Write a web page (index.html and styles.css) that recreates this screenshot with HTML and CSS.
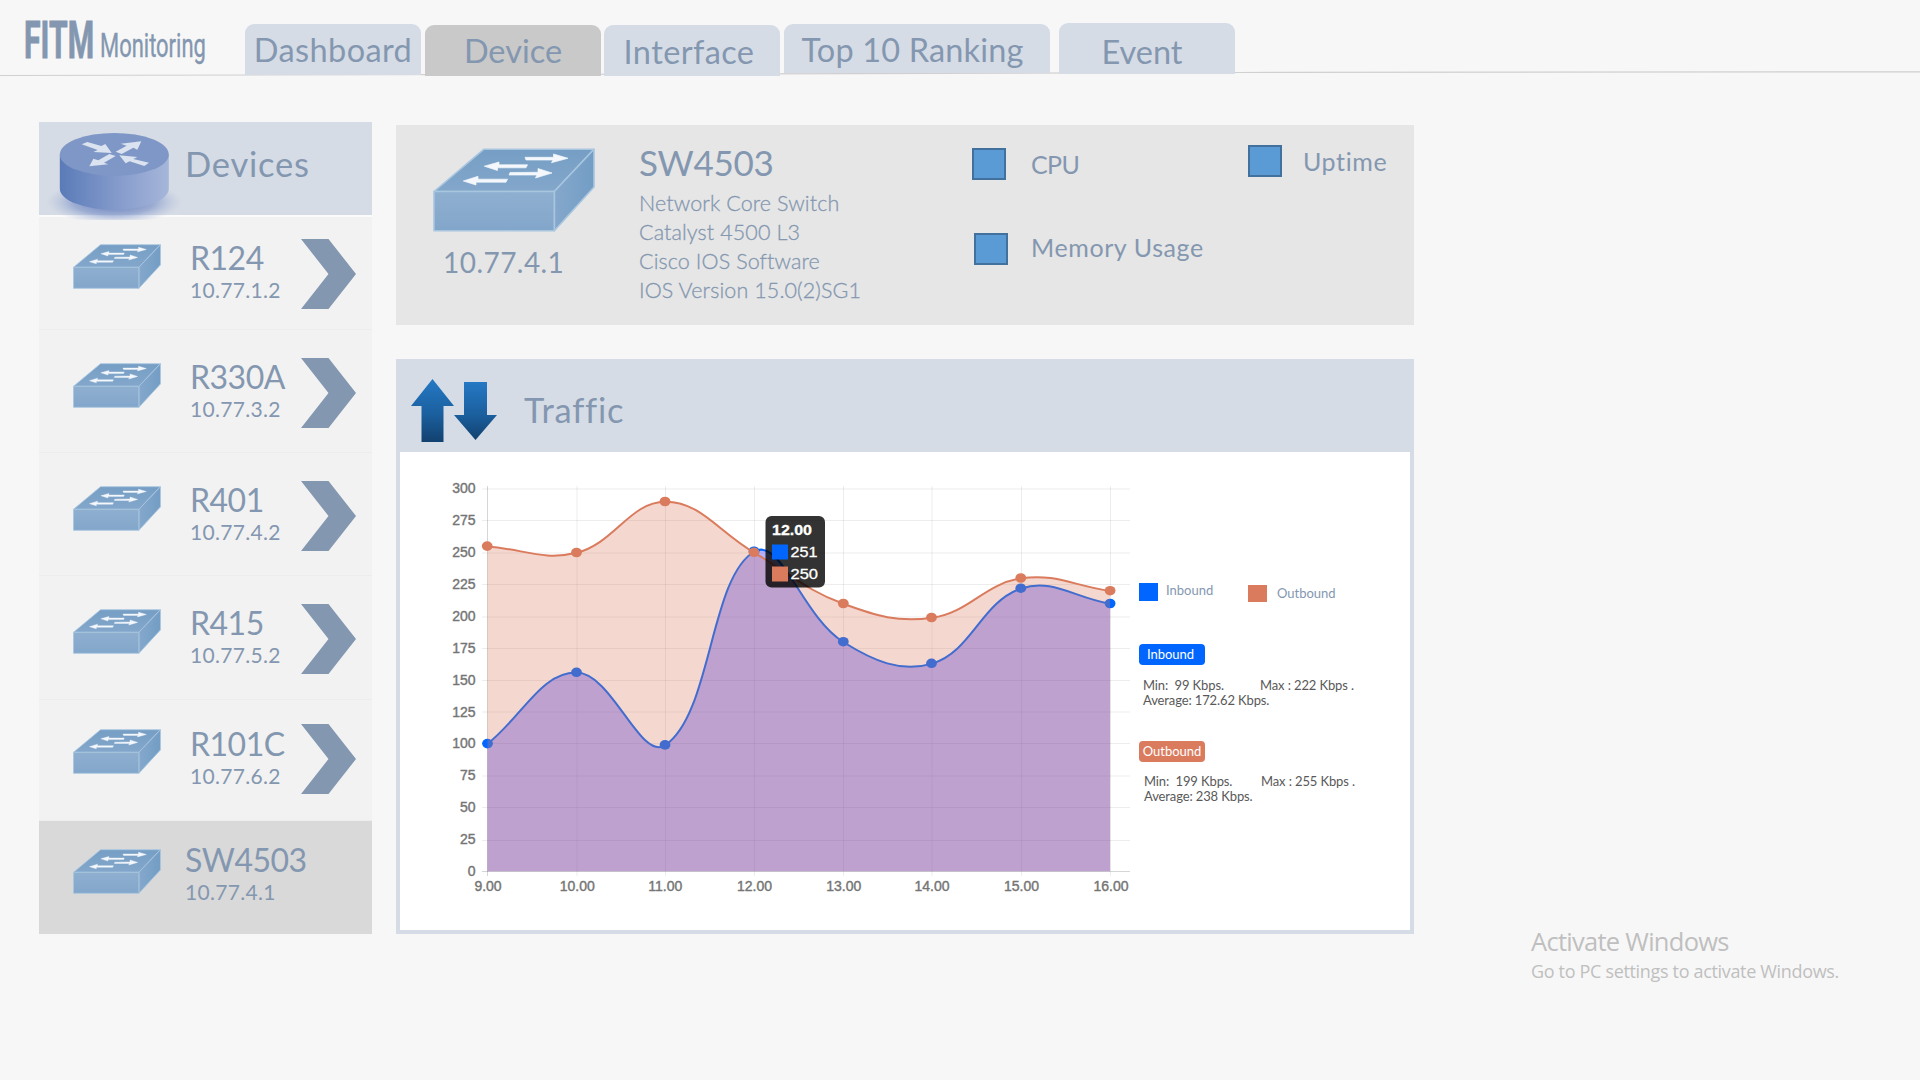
FILE: index.html
```html
<!DOCTYPE html>
<html lang="en">
<head>
<meta charset="utf-8">
<title>FITM Monitoring</title>
<link rel="stylesheet" href="styles.css">
</head>
<body>
<svg class="defs" aria-hidden="true">
  <defs>
    <linearGradient id="swTop" x1="0" y1="0" x2="0" y2="1"><stop offset="0" stop-color="#769ec4"/><stop offset="1" stop-color="#83a7cb"/></linearGradient>
    <linearGradient id="swFront" x1="0" y1="0" x2="0" y2="1"><stop offset="0" stop-color="#8fafd0"/><stop offset="1" stop-color="#82a6ca"/></linearGradient>
    <linearGradient id="swSide" x1="0" y1="0" x2="1" y2="0"><stop offset="0" stop-color="#85a8cc"/><stop offset="1" stop-color="#739dc4"/></linearGradient>
    <symbol id="switch" viewBox="0 0 162 84" preserveAspectRatio="none">
      <g stroke="#a9c6df" stroke-width="1.6" stroke-linejoin="round">
        <path fill="url(#swTop)" d="M1 43.500 50.700 1.300H161L121.300 43.500Z"/>
        <path fill="url(#swSide)" d="M121.300 43.500 161 1.300V39L121.300 82.700Z"/>
        <path fill="url(#swFront)" d="M1 43.500H121.300V82.700H1Z"/>
      </g>
      <g fill="#f4f8fc" stroke="#f4f8fc" stroke-width=".7">
        <path d="M92 9.300 93 12H120L118.500 14.700 135 10.300 120.500 6 120.500 9.300Z"/>
        <path d="M51.300 18.200 66 14V16.800H94.500L93 19.800H64.500V22.500Z"/>
        <path d="M77 24.500 76 27H104L102.500 30 119 25 105 20.600V24.300Z"/>
        <path d="M30.300 33 45 28.300V31.200H74.500L73 34.200H43V37Z"/>
      </g>
    </symbol>
    <symbol id="chevron" viewBox="0 0 55 70" preserveAspectRatio="none"><path fill="#8497b0" d="M0 0H27.500L55 35 27.500 70H0L27.500 35Z"/></symbol>
  </defs>
</svg>

<header class="topbar">
  <svg class="topbar-rule" viewBox="0 0 1920 6"><path d="M0 4.500 735 3 1240 1.500 1920 0.800" fill="none" stroke="#d0d0d0" stroke-width="1.200"/></svg>
  <div class="brand"><span class="brand-main">FITM</span><span class="brand-sub">Monitoring</span></div>
  <nav class="tabs">
    <a class="tab tab-dashboard">Dashboard</a>
    <a class="tab tab-device">Device</a>
    <a class="tab tab-interface">Interface</a>
    <a class="tab tab-ranking">Top 10 Ranking</a>
    <a class="tab tab-event">Event</a>
  </nav>
</header>

<main class="layout">
  <aside class="sidebar">
    <div class="sidebar-head">
      <svg class="router" width="135" height="90" viewBox="0 0 135 90">
        <defs>
          <linearGradient id="rtSide"><stop offset="0" stop-color="#5a7bb8"/><stop offset=".6" stop-color="#8a9fce"/><stop offset="1" stop-color="#a6b6da"/></linearGradient>
          <radialGradient id="rtShadow"><stop offset="0" stop-color="#5570b4"/><stop offset=".6" stop-color="#7d93c8" stop-opacity=".65"/><stop offset="1" stop-color="#a9b9dd" stop-opacity="0"/></radialGradient>
        </defs>
        <ellipse cx="67" cy="72" rx="68" ry="22" fill="url(#rtShadow)"/>
        <path fill="url(#rtSide)" d="M12.800 24.400V58.400A54.500 21.500 0 0 0 121.800 58.400V24.400Z"/>
        <ellipse cx="67.300" cy="24.400" rx="54.500" ry="21.500" fill="#7f97c6"/>
        <g fill="#dbe2f0" transform="translate(-17 -20) scale(.33333)">
          <path d="M155 103 172 96 214 108 226 102 245 129 190 126 203 120Z"/>
          <path d="M257 125 290 107 272 101 334 94 322 119 310 113 275 132Z"/>
          <path d="M238 132 257 138 222 158 235 163 178 169 190 146 205 151Z"/>
          <path d="M268 136 322 141 310 147 357 158 343 168 299 154 287 160Z"/>
        </g>
      </svg>
      <h2 class="sidebar-title">Devices</h2>
    </div>
    <div class="device device-1"><svg class="device-icon"><use href="#switch"/></svg><div class="device-text"><b>R124</b><span>10.77.1.2</span></div><svg class="device-arrow"><use href="#chevron"/></svg></div>
    <div class="device device-2"><svg class="device-icon"><use href="#switch"/></svg><div class="device-text"><b>R330A</b><span>10.77.3.2</span></div><svg class="device-arrow"><use href="#chevron"/></svg></div>
    <div class="device device-3"><svg class="device-icon"><use href="#switch"/></svg><div class="device-text"><b>R401</b><span>10.77.4.2</span></div><svg class="device-arrow"><use href="#chevron"/></svg></div>
    <div class="device device-4"><svg class="device-icon"><use href="#switch"/></svg><div class="device-text"><b>R415</b><span>10.77.5.2</span></div><svg class="device-arrow"><use href="#chevron"/></svg></div>
    <div class="device device-5"><svg class="device-icon"><use href="#switch"/></svg><div class="device-text"><b>R101C</b><span>10.77.6.2</span></div><svg class="device-arrow"><use href="#chevron"/></svg></div>
    <div class="device device-active"><svg class="device-icon"><use href="#switch"/></svg><div class="device-text"><b>SW4503</b><span>10.77.4.1</span></div></div>
  </aside>

  <div class="content">
    <section class="summary">
      <div class="summary-device"><svg class="summary-icon"><use href="#switch"/></svg><span class="summary-ip">10.77.4.1</span></div>
      <div class="summary-info">
        <h1 class="summary-name">SW4503</h1>
        <p>Network Core Switch</p>
        <p>Catalyst 4500 L3</p>
        <p>Cisco IOS Software</p>
        <p>IOS Version 15.0(2)SG1</p>
      </div>
      <div class="metrics">
        <div class="metric metric-cpu"><i></i><span>CPU</span></div>
        <div class="metric metric-memory"><i></i><span>Memory Usage</span></div>
      </div>
      <div class="metric metric-uptime"><i></i><span>Uptime</span></div>
    </section>

    <section class="traffic">
      <div class="traffic-head">
        <svg class="traffic-icon" width="87" height="64" viewBox="0 0 87 64">
          <defs><linearGradient id="arrow" x1="0" y1="0" x2="0" y2="1"><stop offset="0" stop-color="#2578c4"/><stop offset=".55" stop-color="#1b609f"/><stop offset="1" stop-color="#12416f"/></linearGradient></defs>
          <path fill="url(#arrow)" d="M21.500 0 43 27H32.500V63H10.500V27H0Z"/>
          <path fill="url(#arrow)" d="M53 3H76V36H86L64.500 61 43 36H53Z"/>
        </svg>
        <h2 class="traffic-title">Traffic</h2>
      </div>
      <div class="traffic-body">
        <svg class="chart" width="735" height="478" viewBox="400 452 735 478">
          <g stroke="#000" stroke-opacity=".07" stroke-width="1">
            <path d="M482 489H1130M482 520.500H1130M482 553H1130M482 584.500H1130M482 617H1130M482 648.500H1130M482 680.500H1130M482 712H1130M482 743.500H1130M482 776H1130M482 807.500H1130M482 840.500H1130"/>
            <path d="M577 486V876M665.500 486V876M754.500 486V876M843.500 486V876M932 486V876M1021.500 486V876M1110.500 486V876"/>
            <path stroke-opacity=".16" d="M487.500 486V876M482 871.500H1130"/>
          </g>
          <path fill="#00f" fill-opacity=".3" d="M487.500 743.900C523.100 715.400 541 672.300 576.500 672.600 612.200 672.900 640.500 762.200 665.400 745.200 711.700 713.700 709.700 577.400 754.400 551.500 780.900 536.100 802 616 843.300 642 873.200 660.800 900.900 673 932.200 663.600 972 651.600 981.200 602 1021.200 588.500 1052.300 578 1074.500 597.700 1110.100 603.800V871.300H487.500Z"/>
          <path fill="none" stroke="#06f" stroke-width="2" d="M487.500 743.900C523.100 715.400 541 672.300 576.500 672.600 612.200 672.900 640.500 762.200 665.400 745.200 711.700 713.700 709.700 577.400 754.400 551.500 780.900 536.100 802 616 843.300 642 873.200 660.800 900.900 673 932.200 663.600 972 651.600 981.200 602 1021.200 588.500 1052.300 578 1074.500 597.700 1110.100 603.800"/>
          <g fill="#06f">
            <ellipse cx="487.500" cy="743.600" rx="5.400" ry="4.800"/><ellipse cx="576.500" cy="672.300" rx="5.400" ry="4.800"/><ellipse cx="665" cy="744.900" rx="5.400" ry="4.800"/><ellipse cx="754" cy="551.200" rx="5.400" ry="4.800"/><ellipse cx="843.300" cy="641.700" rx="5.400" ry="4.800"/><ellipse cx="931.500" cy="663.300" rx="5.400" ry="4.800"/><ellipse cx="1020.800" cy="588.200" rx="5.400" ry="4.800"/><ellipse cx="1110.100" cy="603.500" rx="5.400" ry="4.800"/>
          </g>
          <path fill="#da7b5d" fill-opacity=".3" d="M487.500 546.400C523.100 549 543.400 561.100 576.500 552.800 614.600 543.300 629.800 501.800 665.400 501.800 701 501.800 718.800 532.400 754.400 552.800 790 573.200 805.400 590 843.300 603.800 876.500 616 898 622.700 932.200 617.800 969.200 612.500 984.200 583.900 1021.200 578.300 1055.400 573.200 1074.500 585.900 1110.100 591V871.300H487.500Z"/>
          <path fill="none" stroke="#da7b5d" stroke-width="2" d="M487.500 546.400C523.100 549 543.400 561.100 576.500 552.800 614.600 543.300 629.800 501.800 665.400 501.800 701 501.800 718.800 532.400 754.400 552.800 790 573.200 805.400 590 843.300 603.800 876.500 616 898 622.700 932.200 617.800 969.200 612.500 984.200 583.900 1021.200 578.300 1055.400 573.200 1074.500 585.900 1110.100 591"/>
          <g fill="#da7b5d">
            <ellipse cx="487.200" cy="546.100" rx="5.400" ry="4.800"/><ellipse cx="576.500" cy="552.500" rx="5.400" ry="4.800"/><ellipse cx="665" cy="501.500" rx="5.400" ry="4.800"/><ellipse cx="754" cy="552.300" rx="5.400" ry="4.800"/><ellipse cx="843.300" cy="603.500" rx="5.400" ry="4.800"/><ellipse cx="931.500" cy="617.500" rx="5.400" ry="4.800"/><ellipse cx="1020.800" cy="578" rx="5.400" ry="4.800"/><ellipse cx="1110.100" cy="590.700" rx="5.400" ry="4.800"/>
          </g>
          <g class="tick tick-y">
            <text x="475.500" y="493">300</text><text x="475.500" y="524.500">275</text><text x="475.500" y="557">250</text><text x="475.500" y="588.500">225</text><text x="475.500" y="621">200</text><text x="475.500" y="652.500">175</text><text x="475.500" y="684.500">150</text><text x="475.500" y="716.500">125</text><text x="475.500" y="748">100</text><text x="475.500" y="780">75</text><text x="475.500" y="811.500">50</text><text x="475.500" y="844">25</text><text x="475.500" y="875.500">0</text>
          </g>
          <g class="tick tick-x">
            <text x="488" y="891">9.00</text><text x="577.300" y="891">10.00</text><text x="665.300" y="891">11.00</text><text x="754.500" y="891">12.00</text><text x="843.700" y="891">13.00</text><text x="932" y="891">14.00</text><text x="1021.500" y="891">15.00</text><text x="1111" y="891">16.00</text>
          </g>
          <rect x="765.500" y="516" width="59.500" height="71.500" rx="6" fill="#000" fill-opacity=".8"/>
          <rect x="772" y="544.500" width="16" height="15" fill="#06f"/>
          <rect x="772" y="566.500" width="16" height="15" fill="#da7b5d"/>
          <g class="tip">
            <text class="tip-title" x="772" y="535" textLength="40" lengthAdjust="spacingAndGlyphs">12.00</text>
            <text x="790.500" y="557" textLength="27" lengthAdjust="spacingAndGlyphs">251</text>
            <text x="790.500" y="579" textLength="27.500" lengthAdjust="spacingAndGlyphs">250</text>
          </g>
        </svg>
        <div class="stats">
          <div class="legend">
            <div class="legend-item legend-in"><i></i><span>Inbound</span></div>
            <div class="legend-item legend-out"><i></i><span>Outbound</span></div>
          </div>
          <span class="badge badge-in">Inbound</span>
          <div class="figures figures-in"><div class="figures-row"><span>Min:&nbsp; 99 Kbps.</span><span>Max : 222 Kbps .</span></div><div>Average: 172.62 Kbps.</div></div>
          <span class="badge badge-out">Outbound</span>
          <div class="figures figures-out"><div class="figures-row"><span>Min:&nbsp; 199 Kbps.</span><span>Max : 255 Kbps .</span></div><div>Average: 238 Kbps.</div></div>
        </div>
      </div>
    </section>
  </div>

  <div class="watermark"><strong>Activate Windows</strong><span>Go to PC settings to activate Windows.</span></div>
</main>
</body>
</html>
```
FILE: styles.css
```css
* { box-sizing: border-box; }
body { margin: 0; width: 1920px; height: 1080px; overflow: hidden; background: #f7f7f7; color: #8497b0; font-family: Lato, "Liberation Sans", sans-serif; white-space: nowrap; }
h1, h2, p { margin: 0; font-weight: 400; }
svg { display: block; flex: none; }
.defs { position: absolute; width: 0; height: 0; }

.topbar { position: relative; display: flex; height: 76px; }
.topbar-rule { position: absolute; left: 0; top: 71px; width: 1920px; height: 6px; }
.brand { width: 245px; padding-left: 24px; display: flex; font-family: Roboto, sans-serif; line-height: 60px; }
.brand-main { width: 76px; padding-top: 11px; font-size: 52px; font-weight: 700; -webkit-text-stroke: .9px; transform: scaleX(.58); transform-origin: 0 0; }
.brand-sub { padding-top: 16px; font-size: 33px; -webkit-text-stroke: .4px; transform: scaleX(.665); transform-origin: 0 0; }
.tabs { position: relative; display: flex; align-items: flex-start; }
.tab { width: 176px; height: 51px; border-radius: 9px 9px 0 0; background: #d6dce5; font-size: 32.500px; line-height: 51px; letter-spacing: .3px; text-align: center; }
.tab-dashboard { margin-top: 24px; letter-spacing: .4px; }
.tab-device { margin: 25px 0 0 4px; background: #c9c9c9; letter-spacing: 0; }
.tab-interface { margin: 25px 0 0 3px; padding-right: 6px; line-height: 54px; letter-spacing: .4px; }
.tab-ranking { width: 266px; height: 49px; margin: 24px 0 0 4px; padding-right: 9px; letter-spacing: .15px; }
.tab-event { margin: 23px 0 0 9px; padding-right: 10px; line-height: 57px; letter-spacing: 0; }

.layout { display: flex; align-items: flex-start; }
.sidebar { width: 333px; margin: 46px 24px 0 39px; }
.sidebar-head { display: flex; height: 95px; padding: 8px 0 0 8px; background: #d6dce5; border-bottom: 2px solid #fbfbfb; }
.router { position: relative; }
.sidebar-title { padding: 12px 0 0 3px; font-size: 34.500px; line-height: 44px; letter-spacing: .8px; }
.device { display: flex; height: 123px; background: #f2f2f2; border-bottom: 1px solid #ededed; padding: 33px 0 0 34px; }
.device-icon { width: 88px; height: 45px; }
.device-arrow { width: 55px; height: 70px; margin-top: -5px; }
.device-text { width: 111px; height: 60px; margin: -4px 0 0 29px; }
.device-text b, .device-text span { display: block; }
.device-text b { font-size: 32px; line-height: 36px; font-weight: 400; letter-spacing: -.5px; }
.device-text span { font-size: 21px; line-height: 28px; letter-spacing: .3px; }
.device-1 { height: 113px; padding-top: 27px; }
.device-4 { height: 124px; }
.device-5 { height: 121px; padding-top: 29px; }
.device-5 .device-text { margin-top: -3px; }
.device-active { height: 113px; padding-top: 28px; background: #d9d9d9; border: 0; }
.device-active .device-text { margin: -7px 0 0 24px; }

.content { width: 1018px; padding-top: 49px; }
.summary { display: flex; height: 200px; background: #e6e6e6; }
.summary-device { width: 243px; padding: 23px 0 0 37px; }
.summary-icon { width: 162px; height: 84px; }
.summary-ip { display: block; margin-left: 10px; font-size: 28px; line-height: 60px; letter-spacing: .45px; }
.summary-info { width: 333px; padding-top: 17px; }
.summary-name { font-size: 35px; line-height: 41px; letter-spacing: -.3px; }
.summary-info p { font-size: 21.500px; line-height: 29px; font-weight: 300; letter-spacing: .1px; -webkit-text-stroke: .3px; position: relative; top: 6px; }
.metric { display: flex; font-size: 25px; line-height: 32px; letter-spacing: .6px; }
.metric i { width: 34px; height: 32px; border: 2px solid #41719c; background: #5b9bd5; }
.metric span { padding: 0 0 0 25px; }
.metric-cpu { letter-spacing: -.6px; }
.metrics { width: 276px; padding-top: 23px; }
.metric-memory { margin: 53px 0 0 2px; }
.metric-memory span { padding: 0 0 0 23px; margin-top: -2px; }
.metric-uptime { padding-top: 20px; }
.metric-uptime span { padding-left: 21px; }

.traffic { height: 575px; margin-top: 34px; border: 4px solid #d6dce5; background: #fff; }
.traffic-head { display: flex; height: 89px; padding: 16px 0 0 11px; background: #d6dce5; }
.traffic-title { padding: 8px 0 0 26px; font-size: 34.500px; line-height: 46px; letter-spacing: .8px; }
.traffic-body { display: flex; }
.tick { font: 14px "Liberation Sans", sans-serif; fill: #757575; stroke: #757575; stroke-width: .4px; }
.tick-y { text-anchor: end; }
.tick-x { text-anchor: middle; }
.tip { font: 14.500px "Liberation Sans", sans-serif; fill: #fff; stroke: #fff; stroke-width: .3px; }
.tip-title { font-weight: 700; }

.stats { padding: 131px 0 0 4px; font-size: 13px; line-height: 18px; }
.legend { display: flex; height: 61px; }
.legend-item { display: flex; width: 109px; }
.legend-item i { width: 19px; height: 18px; background: #06f; }
.legend-item span { margin: -2px 0 0 8px; }
.legend-out { padding-top: 2px; }
.legend-out i { height: 17px; background: #da7b5d; }
.legend-out span { margin: -1px 0 0 10px; }
.badge { display: block; width: 66px; height: 21px; border-radius: 4px; background: #06f; color: #fff; line-height: 21px; text-align: center; }
.badge-in { padding-right: 3px; }
.badge-out { background: #da7b5d; }
.figures { height: 76px; padding: 13px 0 0 4px; color: #595959; line-height: 15px; letter-spacing: -.12px; }
.figures-row { display: flex; }
.figures-row span:first-child { width: 117px; }
.figures-out { padding: 12px 0 0 5px; }

.watermark { display: flex; flex-direction: column; margin: 846px 0 0 117px; font-family: "Open Sans", "Noto Sans", sans-serif; color: #bfbfbf; }
.watermark strong { font-size: 25.500px; line-height: 38px; font-weight: 400; letter-spacing: -.72px; }
.watermark span { font-size: 18px; line-height: 22px; letter-spacing: -.33px; }
```
